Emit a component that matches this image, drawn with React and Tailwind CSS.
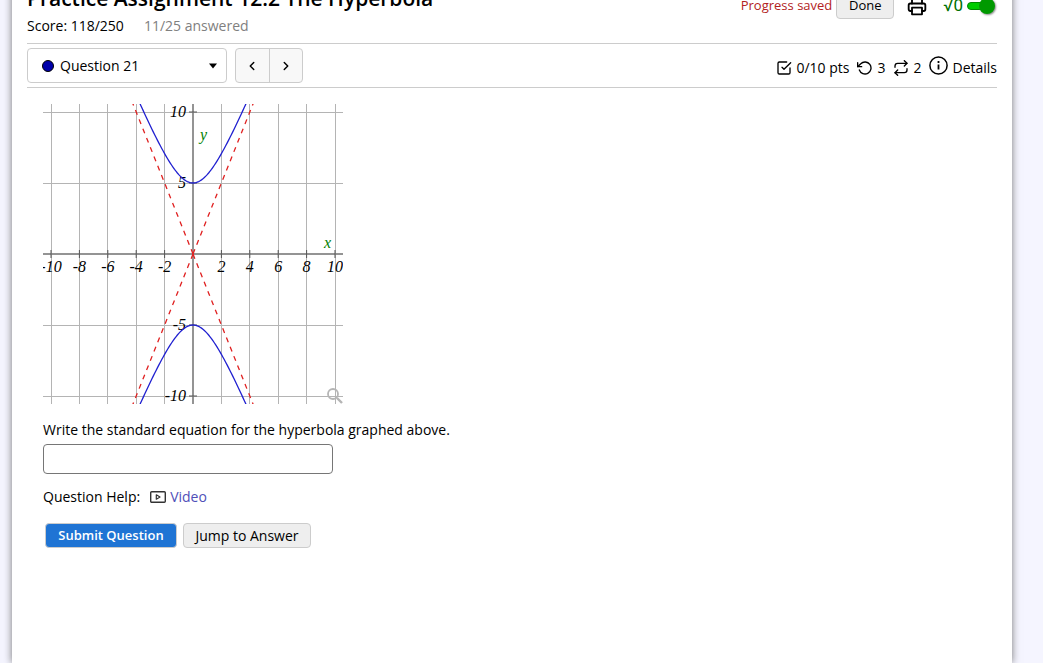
import React, { useState } from 'react';
import { ChevronLeft, ChevronRight } from 'lucide-react';

const UNIT = 14.2;
const SIZE = 300;
const toX = (x) => SIZE / 2 + x * UNIT;
const toY = (y) => SIZE / 2 - y * UNIT;

// one branch of y^2/25 - x^2/4 = 1
const branch = (sign) => {
  const points = [];
  for (let x = -4; x <= 4.01; x += 0.1) {
    points.push(`${toX(x).toFixed(2)},${toY(sign * 5 * Math.sqrt(1 + (x * x) / 4)).toFixed(2)}`);
  }
  return points.join(' ');
};

const xTicks = [-10, -8, -6, -4, -2, 2, 4, 6, 8, 10];
const yTicks = [-10, -5, 5, 10];

const HyperbolaGraph = () => (
  <svg
    width={SIZE}
    height={SIZE}
    viewBox={`0 0 ${SIZE} ${SIZE}`}
    className="block"
    role="img"
    aria-label="Graph of a hyperbola"
  >
    <g stroke="#b4b4b4" strokeWidth="1" shapeRendering="crispEdges">
      {xTicks.map((x) => (
        <line key={x} x1={toX(x)} x2={toX(x)} y1="0" y2={SIZE} />
      ))}
      {yTicks.map((y) => (
        <line key={y} y1={toY(y)} y2={toY(y)} x1="0" x2={SIZE} />
      ))}
    </g>
    <g stroke="#949494" strokeWidth="2">
      <line x1="150" x2="150" y1="0" y2={SIZE} />
      <line x1="0" x2={SIZE} y1="150" y2="150" />
    </g>
    <g stroke="#555555" strokeWidth="1">
      {xTicks.map((x) => (
        <line key={x} x1={toX(x)} x2={toX(x)} y1="146" y2="154" />
      ))}
      {yTicks.map((y) => (
        <line key={y} y1={toY(y)} y2={toY(y)} x1="146" x2="154" />
      ))}
    </g>
    <g className="font-['Liberation_Serif',serif] text-[16px] italic" fill="#000000">
      {xTicks.map((x) => (
        <text key={x} x={toX(x)} y="168" textAnchor="middle">
          {x}
        </text>
      ))}
      {yTicks.map((y) => (
        <text key={y} x="143" y={toY(y) + 5} textAnchor="end">
          {y}
        </text>
      ))}
      <text x="157" y="36" fill="#008000">y</text>
      <text x="281" y="144" fill="#008000">x</text>
    </g>
    <g stroke="#e02020" strokeWidth="1.3" strokeDasharray="5 5">
      <line x1="150" y1="150" x2={toX(4.4)} y2={toY(11)} />
      <line x1="150" y1="150" x2={toX(-4.4)} y2={toY(11)} />
      <line x1="150" y1="150" x2={toX(4.4)} y2={toY(-11)} />
      <line x1="150" y1="150" x2={toX(-4.4)} y2={toY(-11)} />
    </g>
    <g fill="none" stroke="#2020d0" strokeWidth="1.3">
      <polyline points={branch(1)} />
      <polyline points={branch(-1)} />
    </g>
    <g fill="none" stroke="#b5b5b5">
      <circle cx="290" cy="290" r="5" strokeWidth="1.8" />
      <path d="M294 294L299 299" strokeWidth="2.4" />
    </g>
  </svg>
);

const PrinterIcon = () => (
  <svg width="20" height="20" viewBox="0 0 24 24" fill="none" stroke="currentColor" strokeWidth="2.2" strokeLinecap="round" strokeLinejoin="round">
    <path d="M6 9V2h12v7" />
    <path d="M6 18H4a2 2 0 0 1-2-2v-5a2 2 0 0 1 2-2h16a2 2 0 0 1 2 2v5a2 2 0 0 1-2 2h-2" />
    <rect x="6" y="14" width="12" height="8" />
  </svg>
);

const CheckSquareIcon = () => (
  <svg width="16" height="16" viewBox="0 0 24 24" fill="none" stroke="currentColor" strokeWidth="2" strokeLinecap="round" strokeLinejoin="round">
    <path d="M9 11l3 3L22 4" />
    <path d="M21 12v7a2 2 0 0 1-2 2H5a2 2 0 0 1-2-2V5a2 2 0 0 1 2-2h11" />
  </svg>
);

const UndoIcon = () => (
  <svg width="16" height="16" viewBox="0 0 24 24" fill="none" stroke="currentColor" strokeWidth="2" strokeLinecap="round" strokeLinejoin="round">
    <path d="M1 4v6h6" />
    <path d="M3.51 15a9 9 0 1 0 2.13-9.36L1 10" />
  </svg>
);

const RepeatIcon = () => (
  <svg width="16" height="16" viewBox="0 0 24 24" fill="none" stroke="currentColor" strokeWidth="2" strokeLinecap="round" strokeLinejoin="round">
    <path d="M17 1l4 4-4 4" />
    <path d="M3 11V9a4 4 0 0 1 4-4h14" />
    <path d="M7 23l-4-4 4-4" />
    <path d="M21 13v2a4 4 0 0 1-4 4H3" />
  </svg>
);

const InfoIcon = () => (
  <svg width="19" height="24" viewBox="0 0 19 24" fill="none" stroke="currentColor" strokeWidth="1.5">
    <circle cx="9.5" cy="9.5" r="8.6" />
    <path d="M9.5 8.5v5" strokeWidth="1.8" />
    <path d="M9.5 5v2" strokeWidth="1.8" />
  </svg>
);

const VideoIcon = () => (
  <svg width="16" height="12" viewBox="0 0 16 12" fill="none" stroke="#333333" strokeWidth="1.4" strokeLinejoin="round">
    <rect x="0.7" y="0.7" width="14.6" height="10.6" rx="1" />
    <path d="M6.3 3.8v4.4L10 6z" strokeWidth="1.2" />
  </svg>
);

const Header = () => {
  const [mathInput, setMathInput] = useState(true);

  return (
    <header className="flex h-[60px] items-start justify-between border-b border-[#cccccc]">
      <div>
        <h1 className="text-[21px] leading-7 font-semibold whitespace-nowrap">
          Practice Assignment 12.2 The Hyperbola
        </h1>
        <div className="mt-1 flex gap-5 leading-5">
          <span>Score: 118/250</span>
          <span className="text-[#808080]">11/25 answered</span>
        </div>
      </div>
      <div className="mt-[9px] flex h-[26px] items-center text-[13px]">
        <span className="text-[#b22222]">Progress saved</span>
        <button type="button" className="ml-1 h-[26px] w-[58px] rounded border border-[#cccccc] bg-[#eeeeee]">
          Done
        </button>
        <button type="button" aria-label="Print" className="ml-[13px]">
          <PrinterIcon />
        </button>
        <label className="ml-4 flex items-center gap-1 text-[#007000]">
          <span className="font-['Roboto',sans-serif] text-[17px]">√0</span>
          <span className="relative mr-[2px] block h-[18px] w-7">
            <input
              type="checkbox"
              role="switch"
              aria-label="Math entry"
              checked={mathInput}
              onChange={(e) => setMathInput(e.target.checked)}
              className="absolute top-[5px] left-0 h-2 w-6 appearance-none rounded-full border border-[#008800] bg-[#aaaaaa] checked:bg-[#00cc00]"
            />
            <span className="pointer-events-none absolute top-px right-0 size-4 rounded-full bg-[#009900] shadow-[1px_1px_2px_#888888]" />
          </span>
        </label>
      </div>
    </header>
  );
};

const QuestionBar = () => (
  <nav className="flex h-11 items-center justify-between border-b border-[#cccccc]">
    <div className="flex gap-2">
      <label className="flex h-[35px] w-[200px] items-center rounded border border-[#cccccc] pr-2 pl-[14px]">
        <span className="size-3 rounded-full border border-black bg-[#0000aa]" />
        <select aria-label="Question" className="ml-1.5 flex-1 appearance-none bg-transparent outline-none">
          <option>Question 21</option>
        </select>
        <svg width="10" height="6" viewBox="0 0 10 6">
          <path d="M1 0.5h8L5 5.5z" fill="black" />
        </svg>
      </label>
      <div className="flex h-[35px] w-[68px] divide-x divide-[#cccccc] rounded border border-[#cccccc] bg-[#f8f8f8]">
        <button type="button" aria-label="Previous question" className="flex flex-1 items-center justify-center">
          <ChevronLeft size={14} strokeWidth={2.5} />
        </button>
        <button type="button" aria-label="Next question" className="flex flex-1 items-center justify-center">
          <ChevronRight size={14} strokeWidth={2.5} />
        </button>
      </div>
    </div>
    <div className="flex items-center gap-2 pt-1">
      <span className="flex items-center gap-1">
        <CheckSquareIcon />
        0/10 pts
      </span>
      <span className="flex items-center gap-1">
        <UndoIcon />3
      </span>
      <span className="flex items-center gap-1">
        <RepeatIcon />2
      </span>
      <button type="button" className="flex items-center gap-1">
        <InfoIcon />
        Details
      </button>
    </div>
  </nav>
);

const Question = () => (
  <main className="pt-4 pl-4">
    <HyperbolaGraph />
    <label htmlFor="answer" className="mt-4 block leading-5">
      Write the standard equation for the hyperbola graphed above.
    </label>
    <input
      id="answer"
      type="text"
      className="mt-1 block h-[30px] w-[290px] rounded border border-[#767676] px-2"
    />
    <p className="mt-[13px] flex items-center leading-5">
      Question Help:
      <a href="#video" className="ml-2.5 flex items-center gap-1 text-[#4f4fb8]">
        <VideoIcon />
        Video
      </a>
    </p>
    <div className="mt-4 flex gap-1.5 pl-0.5">
      <button type="button" className="h-[25px] w-[132px] rounded border border-[#cccccc] bg-[#1f74d4] text-[13px] font-semibold text-white">
        Submit Question
      </button>
      <button type="button" className="h-[25px] w-32 rounded border border-[#cccccc] bg-[#eeeeee]">
        Jump to Answer
      </button>
    </div>
  </main>
);

export default function App() {
  return (
    <div className="flex h-screen overflow-hidden bg-[#f5f5ff] font-['Trebuchet_MS','Open_Sans',sans-serif] text-[14px] text-black">
      <div className="-mt-4 mr-[31px] ml-3 flex-1 bg-white px-[15px] shadow-[0_0_8px_#777777]">
        <Header />
        <QuestionBar />
        <Question />
      </div>
    </div>
  );
}
